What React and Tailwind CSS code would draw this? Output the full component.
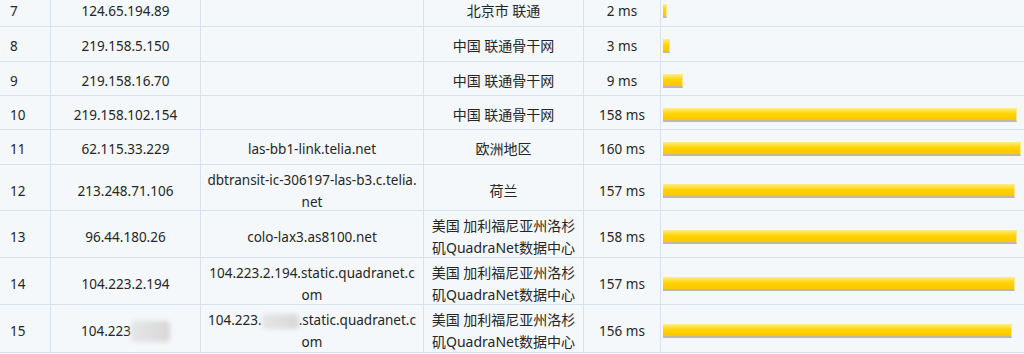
import React from "react";

const rows = [
  { n: 7, ip: "124.65.194.89", host: [], loc: ["北京市 联通"], ms: 2, h: "h-[35px]" },
  { n: 8, ip: "219.158.5.150", host: [], loc: ["中国 联通骨干网"], ms: 3, h: "h-[35px]" },
  { n: 9, ip: "219.158.16.70", host: [], loc: ["中国 联通骨干网"], ms: 9, h: "h-[34px]" },
  { n: 10, ip: "219.158.102.154", host: [], loc: ["中国 联通骨干网"], ms: 158, h: "h-[34px]" },
  { n: 11, ip: "62.115.33.229", host: ["las-bb1-link.telia.net"], loc: ["欧洲地区"], ms: 160, h: "h-[35px]" },
  {
    n: 12,
    ip: "213.248.71.106",
    host: ["dbtransit-ic-306197-las-b3.c.telia.", "net"],
    loc: ["荷兰"],
    ms: 157,
    h: "h-[46px]",
  },
  {
    n: 13,
    ip: "96.44.180.26",
    host: ["colo-lax3.as8100.net"],
    loc: ["美国 加利福尼亚州洛杉", "矶QuadraNet数据中心"],
    ms: 158,
    h: "h-[47px]",
  },
  {
    n: 14,
    ip: "104.223.2.194",
    host: ["104.223.2.194.static.quadranet.c", "om"],
    loc: ["美国 加利福尼亚州洛杉", "矶QuadraNet数据中心"],
    ms: 157,
    h: "h-[47px]",
  },
  {
    n: 15,
    ip: null,
    host: null,
    loc: ["美国 加利福尼亚州洛杉", "矶QuadraNet数据中心"],
    ms: 156,
    h: "h-[48px]",
  },
];

// blurred-out part of a masked address
function Smudge({ className }) {
  return (
    <span
      className={`inline-block align-middle rounded-[4px] blur-[2px] bg-gradient-to-r from-[#e6e6e6] to-[#d8d8d8] ${className}`}
    />
  );
}

function Bar({ ms }) {
  return (
    <div
      className="h-[14px] border-b-2 border-[#bcb9a8] border-r border-r-[#ffe98a] bg-[linear-gradient(to_bottom,#ffec94_0%,#ffe24a_22%,#ffd300_48%,#fbc700_100%)]"
      style={{ width: `${ms * 2.24}px` }}
    />
  );
}

const cell =
  "flex items-center justify-center text-center pt-[4px] border-r border-[#d8e2ee]";

export default function App() {
  return (
    <div
      className="w-[1024px] h-[354px] overflow-hidden bg-[#f4f8fa] text-[#262626] text-[13.5px] leading-[22px]"
      style={{ fontFamily: '"Noto Sans", "Noto Sans CJK SC", sans-serif' }}
    >
      <div className="-mt-[8px]">
        {rows.map((r) => (
          <div
            key={r.n}
            className={`grid grid-cols-[51px_150px_223px_160px_77px_1fr] border-b border-[#d8e2ee] ${r.h}`}
          >
            <div className="flex items-center pl-[10px] pt-[4px] border-r border-[#d8e2ee]">
              {r.n}
            </div>
            <div className={cell}>
              {r.ip ? (
                r.ip
              ) : (
                <span className="whitespace-nowrap">
                  104.223
                  <Smudge className="w-[39px] h-[21px]" />
                </span>
              )}
            </div>
            <div className={cell}>
              {r.host ? (
                <div>
                  {r.host.map((line) => (
                    <div key={line} className="whitespace-nowrap">
                      {line}
                    </div>
                  ))}
                </div>
              ) : (
                <div>
                  <div className="whitespace-nowrap">
                    104.223.
                    <Smudge className="w-[37px] h-[15px]" />
                    .static.quadranet.c
                  </div>
                  <div>om</div>
                </div>
              )}
            </div>
            <div className={`${cell} text-[14px]`}>
              <div>
                {r.loc.map((line) => (
                  <div key={line} className="whitespace-nowrap">
                    {line}
                  </div>
                ))}
              </div>
            </div>
            <div className={cell}>{r.ms} ms</div>
            <div className="flex items-center pl-[2px] pt-[4px]">
              <Bar ms={r.ms} />
            </div>
          </div>
        ))}
      </div>
    </div>
  );
}
